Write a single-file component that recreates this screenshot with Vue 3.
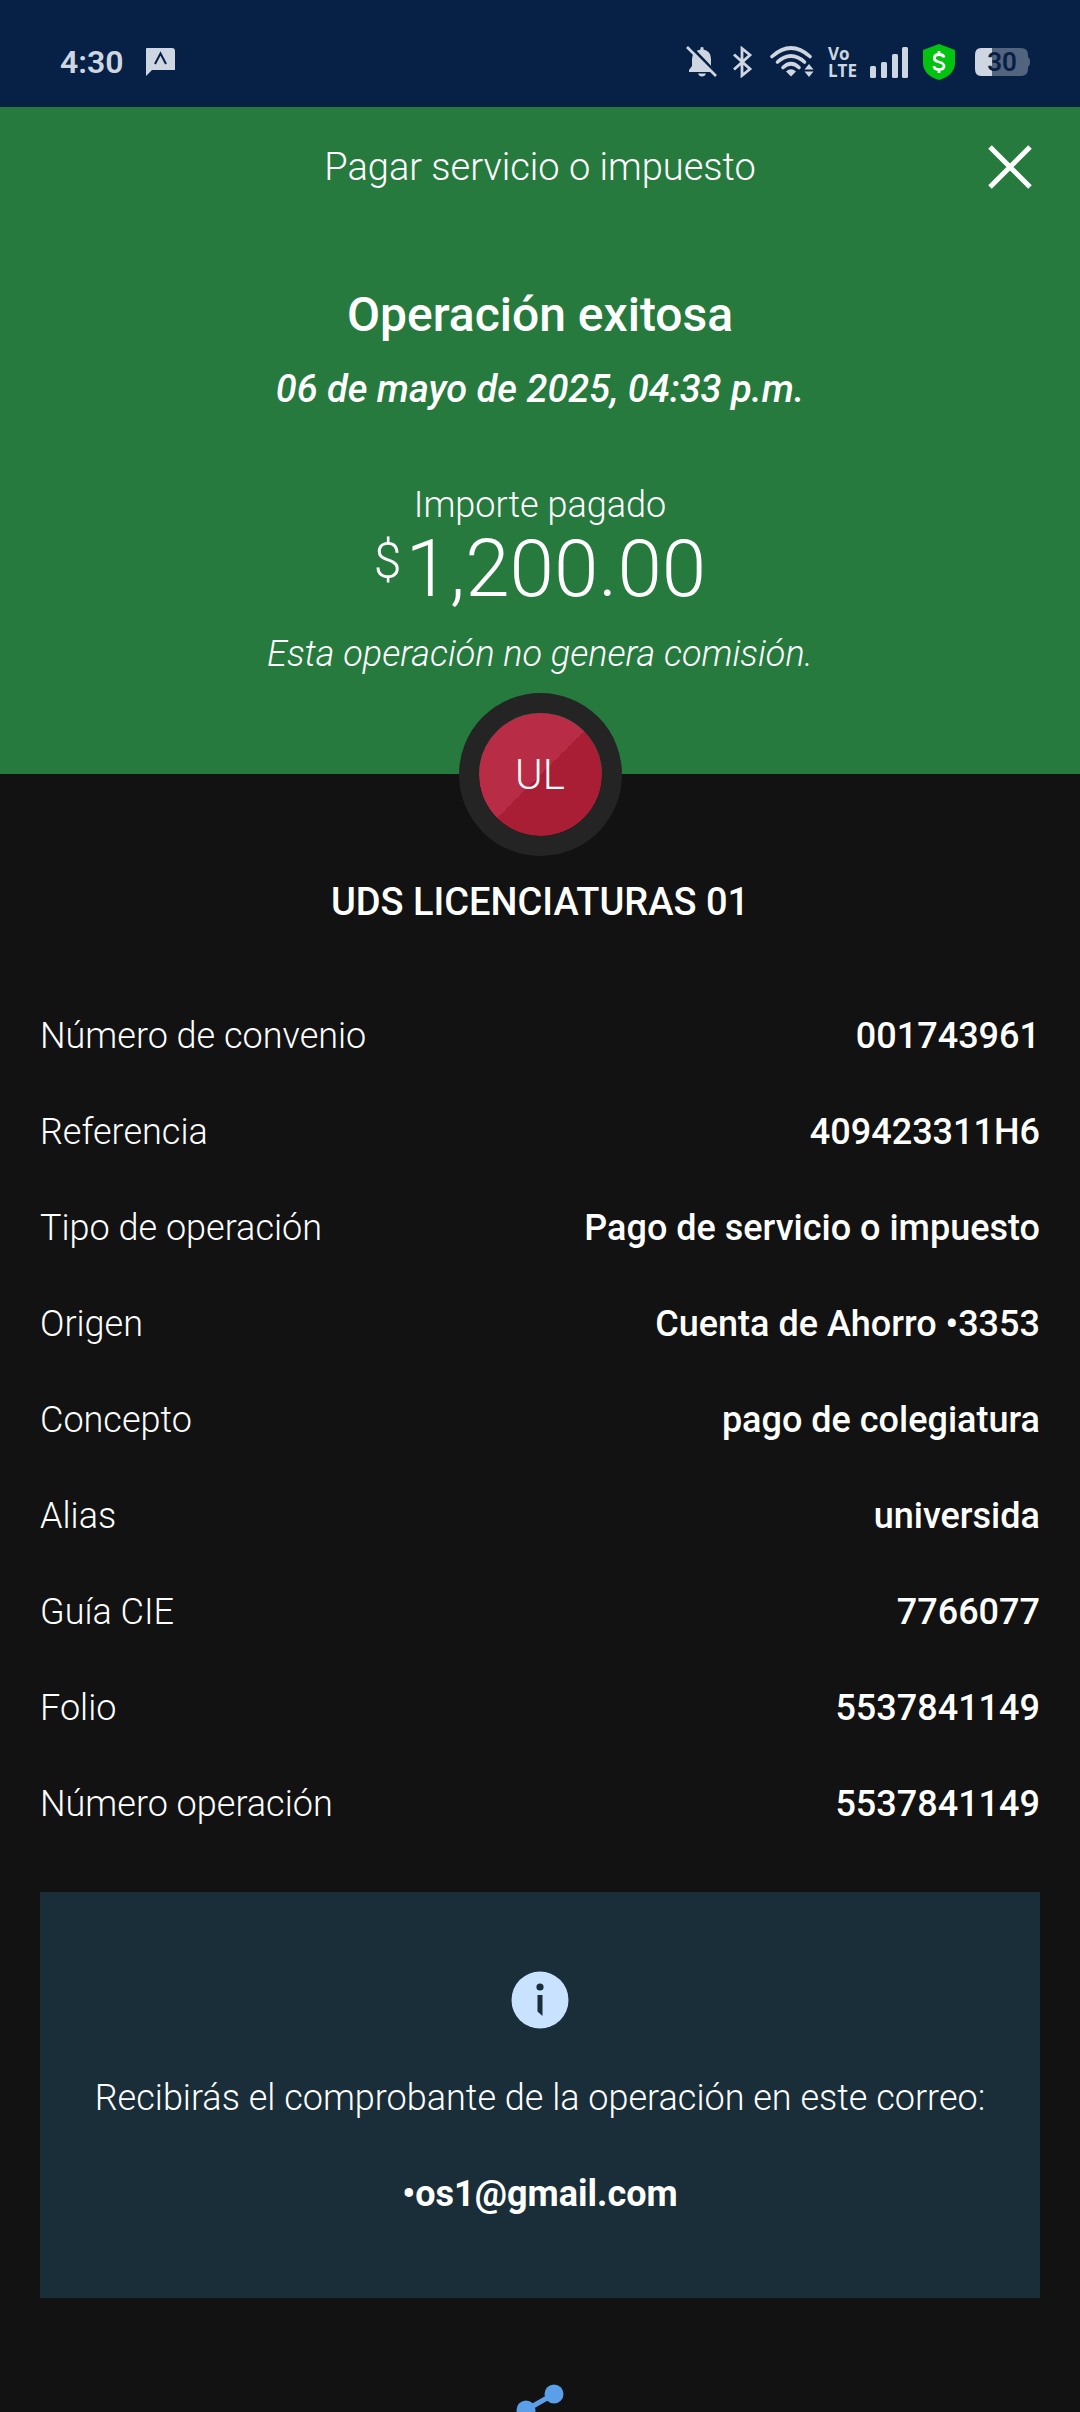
<script setup>
const details = [
  { label: 'Número de convenio', value: '001743961' },
  { label: 'Referencia', value: '409423311H6' },
  { label: 'Tipo de operación', value: 'Pago de servicio o impuesto' },
  { label: 'Origen', value: 'Cuenta de Ahorro •3353' },
  { label: 'Concepto', value: 'pago de colegiatura' },
  { label: 'Alias', value: 'universida' },
  { label: 'Guía CIE', value: '7766077' },
  { label: 'Folio', value: '5537841149' },
  { label: 'Número operación', value: '5537841149' }
]
</script>

<template>
  <div class="screen">
    <div class="status-bar">
      <span class="clock">4:30</span>
      <svg class="chat-icon" width="30" height="28" viewBox="0 0 30 28">
        <path d="M1 0H26Q29 0 29 3V22H6L0 28V1Q0 0 1 0Z" fill="#ced6e1" />
        <path d="M9 16L14.500 5.500L20 16" fill="none" stroke="#072146" stroke-width="2" />
      </svg>

      <div class="status-icons">
        <svg width="32" height="32" viewBox="0 0 32 32">
          <path d="M14.500 1.500Q16 .5 17.500 1.500V3.500Q25 5 25 13V20L28 24V26H3V24L6 20V13Q6 5 14.500 3.500ZM12 27.500H20Q19 30.500 16 30.500T12 27.500Z" fill="#ced6e1" />
          <path d="M4 0L31 28" stroke="#072146" stroke-width="3" />
          <path d="M1 1L30 30" stroke="#ced6e1" stroke-width="2.600" />
        </svg>
        <svg width="24" height="32" viewBox="0 0 24 32">
          <path d="M2 8.500L18 23L10 29.500V2.500L18 9L2 23.500" fill="none" stroke="#ced6e1" stroke-width="2.800" />
        </svg>
        <svg width="44" height="32" viewBox="0 0 44 32">
          <g fill="none" stroke="#ced6e1" stroke-width="3.600" stroke-linecap="round">
            <path d="M2 10.500Q21 -6.500 40 10.500" />
            <path d="M7.500 16Q21 4 34.500 16" />
            <path d="M13 21.500Q21 14 29 21.500" />
          </g>
          <path d="M16 25.500Q21 21 26 25.500L21 30.500Z" fill="#ced6e1" />
          <path d="M34.500 23.500L39 18L43.500 23.500ZM34.500 25.500H43.500L39 31Z" fill="#ced6e1" />
        </svg>
        <div class="volte"><span>Vo</span><span>LTE</span></div>
        <svg width="38" height="32" viewBox="0 0 38 32">
          <g fill="#ced6e1">
            <rect x="0" y="20" width="6" height="12" rx="1.500" />
            <rect x="11" y="16" width="6" height="16" rx="1.500" />
            <rect x="22" y="8" width="6" height="24" rx="1.500" />
            <rect x="32" y="1" width="6" height="31" rx="1.500" />
          </g>
        </svg>
        <svg width="38" height="38" viewBox="0 0 38 38">
          <path d="M17 1L33 7V20C33 28 27 34 17 37C7 34 1 28 1 20V7Z" fill="#02c30f" />
          <path d="M22 14.500Q21.500 11.500 17 11.500T12.300 15Q12.300 18 17 19T22 23Q22 26.500 17 26.500T12 23M17 8V12M17 26V30" fill="none" stroke="#fff" stroke-width="2.800" />
        </svg>
        <div class="battery">
          <svg width="56" height="28" viewBox="0 0 56 28">
            <path d="M17 0H47Q54 0 54 7V9Q56 10 56 14T54 19V21Q54 28 47 28H17Z" fill="#53647e" />
            <path d="M7 0H18V28H7Q1 28 1 21V7Q1 0 7 0Z" fill="#ced6e1" />
          </svg>
          <span class="battery-level">30</span>
        </div>
      </div>
    </div>

    <header class="summary">
      <div class="title-bar">
        <h1>Pagar servicio o impuesto</h1>
        <button class="close" type="button" aria-label="Cerrar">
          <svg width="44" height="44" viewBox="0 0 44 44">
            <path d="M2 2L42 42M42 2L2 42" stroke="#fff" stroke-width="5" />
          </svg>
        </button>
      </div>
      <h2>Operación exitosa</h2>
      <p class="date">06 de mayo de 2025, 04:33 p.m.</p>
      <p class="amount-label">Importe pagado</p>
      <p class="amount"><span class="currency">$</span>1,200.00</p>
      <p class="fee">Esta operación no genera comisión.</p>
    </header>

    <main>
      <div class="avatar">UL</div>
      <h3>UDS LICENCIATURAS 01</h3>

      <dl class="details">
        <div v-for="item in details" :key="item.label" class="detail-row">
          <dt>{{ item.label }}</dt>
          <dd>{{ item.value }}</dd>
        </div>
      </dl>

      <section class="notice">
        <svg width="58" height="58" viewBox="0 0 58 58">
          <circle cx="29" cy="29" r="28.500" fill="#c9e2ff" />
          <circle cx="29" cy="16" r="3.600" fill="#192e38" />
          <path d="M26.500 24H31.500V45L26.500 40.500Z" fill="#192e38" />
        </svg>
        <p>Recibirás el comprobante de la operación en este correo:</p>
        <strong>•os1@gmail.com</strong>
      </section>

      <button class="share" type="button" aria-label="Compartir">
        <svg width="48" height="52" viewBox="0 0 48 52">
          <path d="M38 10L10 26L38 42" fill="none" stroke="#5a9fe8" stroke-width="5" />
          <g fill="#5a9fe8">
            <circle cx="38" cy="10" r="9.500" />
            <circle cx="10" cy="26" r="9.500" />
            <circle cx="38" cy="42" r="9.500" />
          </g>
        </svg>
      </button>
    </main>
  </div>
</template>

<style>
body {
  margin: 0;
  background: #121212;
}
</style>

<style scoped>
.screen {
  height: 100vh;
  overflow: hidden;
  background: #121212;
  color: #fff;
  font-family: Roboto, "Liberation Sans", sans-serif;
  font-size: 36px;
  font-weight: 300;
  line-height: 48px;
}

h1, h2, h3, p, dl, dd {
  margin: 0;
}

svg {
  display: block;
}

button {
  padding: 0;
  border: 0;
  background: none;
  cursor: pointer;
}

/* Status bar */
.status-bar {
  display: flex;
  align-items: center;
  box-sizing: border-box;
  height: 107px;
  padding: 16px 50px 0 60px;
  background: #072146;
  color: #ced6e1;
}
.clock {
  margin-right: 22px;
  font-size: 32px;
  font-weight: 600;
}
.status-icons {
  display: flex;
  align-items: center;
  gap: 14px;
  margin-left: auto;
}
.volte {
  display: flex;
  flex-direction: column;
  width: 28px;
  font-family: "Open Sans", Roboto, sans-serif;
  font-size: 17px;
  font-weight: 700;
  line-height: 17px;
}
.battery {
  position: relative;
}
.battery-level {
  position: absolute;
  inset: 0;
  color: #072146;
  font-size: 26px;
  font-weight: 600;
  line-height: 28px;
  text-align: center;
}

/* Green summary */
.summary {
  padding-bottom: 96px;
  background: #277a3e;
  text-align: center;
}
.title-bar {
  display: grid;
  grid-template-columns: 92px 1fr 92px;
  align-items: center;
  height: 120px;
}
h1 {
  grid-column: 2;
  font-size: 38px;
  font-weight: 300;
}
.close {
  justify-self: start;
}
h2 {
  margin-top: 60px;
  font-size: 48px;
  font-weight: 500;
  line-height: 56px;
}
.date {
  margin-top: 22px;
  font-size: 38px;
  font-style: italic;
  font-weight: 500;
}
.amount-label {
  margin-top: 68px;
}
.amount {
  display: flex;
  justify-content: center;
  align-items: flex-start;
  gap: 4px;
  font-size: 80px;
  line-height: 80px;
}
.currency {
  font-size: 50px;
  line-height: 64px;
}
.fee {
  margin-top: 21px;
  font-style: italic;
}

/* Payee */
main {
  display: flex;
  flex-direction: column;
  align-items: center;
}
.avatar {
  display: flex;
  align-items: center;
  justify-content: center;
  width: 123px;
  height: 123px;
  margin-top: -81px;
  border: 20px solid #242424;
  border-radius: 50%;
  background: linear-gradient(135deg, #b92c45 50%, #a91e34 50%) padding-box;
  font-size: 42px;
}
h3 {
  margin-top: 22px;
  font-size: 38px;
  font-weight: 500;
}
.details {
  align-self: stretch;
  display: flex;
  flex-direction: column;
  gap: 48px;
  margin-top: 86px;
  padding: 0 40px;
}
.detail-row {
  display: flex;
  justify-content: space-between;
}
dd {
  font-weight: 500;
}

/* Receipt notice */
.notice {
  align-self: stretch;
  display: flex;
  flex-direction: column;
  align-items: center;
  margin: 64px 40px 0;
  padding: 79px 0 80px;
  background: #192e38;
}
.notice p {
  margin-top: 45px;
}
.notice strong {
  margin-top: 48px;
  font-weight: 700;
}
.share {
  margin-top: 86px;
}
</style>
